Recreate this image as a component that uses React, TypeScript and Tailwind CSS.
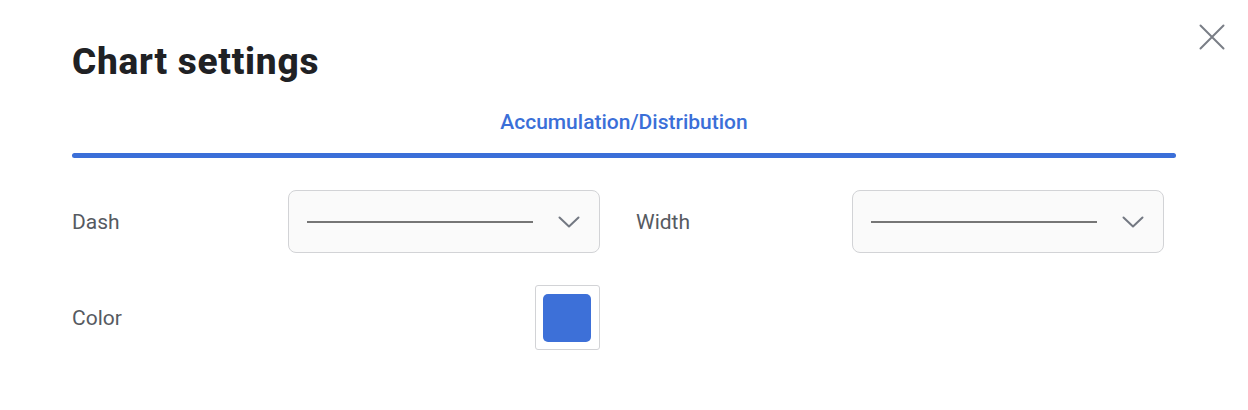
import React from "react";

function Chevron() {
  return (
    <svg width="22" height="12" viewBox="0 0 22 12" fill="none">
      <path d="M1.5 1.5 L11 10.5 L20.5 1.5" stroke="#737882" strokeWidth="2" strokeLinecap="round" strokeLinejoin="round" />
    </svg>
  );
}

function LineSelect() {
  return (
    <div className="w-[312px] h-[63px] rounded-[8px] border border-[#d2d3d6] bg-[#fafafa] flex items-center pl-[18px] pr-[19px]">
      <div className="w-[226px] h-[2px] bg-[#767676]" />
      <div className="ml-auto flex items-center">
        <Chevron />
      </div>
    </div>
  );
}

export default function App() {
  return (
    <div className="relative w-[1248px] h-[410px] bg-white font-['Roboto',sans-serif]">
      <button className="absolute left-[1198px] top-[23px] w-[28px] h-[28px] flex items-center justify-center">
        <svg width="28" height="28" viewBox="0 0 28 28" fill="none">
          <path d="M2.5 2.5 L25.5 25.5 M25.5 2.5 L2.5 25.5" stroke="#7a7e86" strokeWidth="2" strokeLinecap="round" />
        </svg>
      </button>
      <div className="pl-[72px] pr-[72px] pt-[42px]">
        <h1 className="text-[37px] leading-[40px] font-extrabold tracking-[0.75px] text-[#202124]">Chart settings</h1>
        <div className="mt-[26px] flex flex-col items-center">
          <div className="text-[21px] leading-[28px] font-medium text-[#3b6fd8]">Accumulation/Distribution</div>
          <div className="mt-[17px] w-full h-[5px] rounded-full bg-[#3b6fd8]" />
        </div>
        <div className="mt-[32px] flex gap-[36px]">
          <div className="w-[528px] flex items-center">
            <span className="flex-1 text-[21px] leading-[28px] text-[#565a61]">Dash</span>
            <LineSelect />
          </div>
          <div className="w-[528px] flex items-center">
            <span className="flex-1 text-[21px] leading-[28px] text-[#565a61]">Width</span>
            <LineSelect />
          </div>
        </div>
        <div className="mt-[32px] flex gap-[36px]">
          <div className="w-[528px] flex items-center">
            <span className="flex-1 text-[21px] leading-[28px] text-[#565a61]">Color</span>
            <div className="w-[65px] h-[65px] rounded-[3px] border border-[#d2d3d6] bg-white flex items-center pl-[7px]">
              <div className="w-[48px] h-[48px] rounded-[5px] bg-[#3d70d8]" />
            </div>
          </div>
        </div>
      </div>
    </div>
  );
}
